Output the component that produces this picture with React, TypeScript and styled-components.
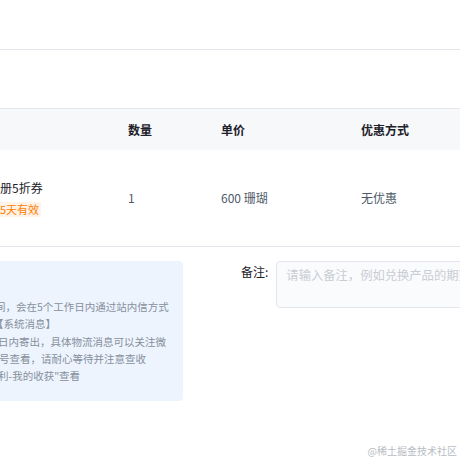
import React from 'react'
import styled, { createGlobalStyle } from 'styled-components'

const Colors = {
  title: '#1d2129',
  text: '#4e5969',
  muted: '#86909c',
  placeholder: '#c9cdd4',
  line: '#e5e6eb',
  headBg: '#f7f8fa',
  tipBg: '#edf4fe',
  orange: '#ff7d00',
  orangeBg: '#fff3e8',
}

const tips = [
  { text: '间，会在5个工作日内通过站内信方式', shift: 5 },
  { text: '【系统消息】', shift: 7 },
  { text: '日内寄出，具体物流消息可以关注微', shift: 2 },
  { text: '号查看，请耐心等待并注意查收', shift: 1 },
  { text: '利-我的收获"查看', shift: 2 },
]

export default function App() {
  return (
    <>
      <GlobalStyle />
      <Page>
        <TopBar />
        <Table>
          <HeadRow>
            <Cell />
            <HeadCell>数量</HeadCell>
            <HeadCell>单价</HeadCell>
            <HeadCell>优惠方式</HeadCell>
          </HeadRow>
          <BodyRow>
            <Cell>
              <Product>
                <ProductName>册5折券</ProductName>
                <Tag>5天有效</Tag>
              </Product>
            </Cell>
            <Cell>1</Cell>
            <Cell>600 珊瑚</Cell>
            <Cell>无优惠</Cell>
          </BodyRow>
        </Table>
        <Bottom>
          <TipBox>
            {tips.map((t) => (
              <TipLine key={t.text} $shift={t.shift}>{t.text}</TipLine>
            ))}
          </TipBox>
          <Remark>
            <RemarkLabel>备注:</RemarkLabel>
            <RemarkInput wrap="off" placeholder="请输入备注，例如兑换产品的期望尺码颜色等" />
          </Remark>
        </Bottom>
        <Watermark>@稀土掘金技术社区</Watermark>
      </Page>
    </>
  )
}

const GlobalStyle = createGlobalStyle`
  html, body {
    margin: 0;
    padding: 0;
    background: #fff;
  }
  body {
    font-family: "Noto Sans CJK SC", "Noto Sans", sans-serif;
    -webkit-font-smoothing: antialiased;
  }
`

const Page = styled.div`
  position: relative;
  width: 460px;
  height: 460px;
  overflow: hidden;
  background: #fff;
`

const TopBar = styled.div`
  height: 49px;
  border-bottom: 1px solid ${Colors.line};
  margin-bottom: 58px;
`

const Table = styled.div`
  display: flex;
  flex-direction: column;
  border-top: 1px solid ${Colors.line};
`

const Row = styled.div`
  display: grid;
  grid-template-columns: 128px 93px 140px 1fr;
  align-items: center;
`

const HeadRow = styled(Row)`
  height: 41px;
  background: ${Colors.headBg};
`

const BodyRow = styled(Row)`
  height: 96px;
  border-bottom: 1px solid ${Colors.line};
`

const Cell = styled.div`
  font-size: 12px;
  line-height: 18px;
  color: ${Colors.text};
  white-space: nowrap;
`

const HeadCell = styled(Cell)`
  color: ${Colors.title};
  font-weight: 700;
`

const Product = styled.div`
  display: flex;
  flex-direction: column;
  align-items: flex-start;
  gap: 5px;
  margin-top: -1px;
`

const ProductName = styled.span`
  color: ${Colors.title};
`

const Tag = styled.span`
  font-size: 11px;
  line-height: 15px;
  padding: 0 2px 0 0;
  color: ${Colors.orange};
  background: ${Colors.orangeBg};
`

const Bottom = styled.div`
  display: flex;
  margin-top: 14px;
  gap: 58px;
`

const TipBox = styled.div`
  flex: none;
  width: 183px;
  height: 140px;
  box-sizing: border-box;
  padding-top: 37px;
  background: ${Colors.tipBg};
  border-radius: 0 4px 4px 0;
  overflow: hidden;
`

const TipLine = styled.div<{ $shift: number }>`
  font-size: 10.5px;
  line-height: 17.25px;
  color: ${Colors.muted};
  white-space: nowrap;
  margin-left: -${(p) => p.$shift}px;
`

const Remark = styled.div`
  display: flex;
  flex: none;
  align-items: flex-start;
  gap: 8px;
`

const RemarkLabel = styled.span`
  font-size: 12px;
  line-height: 18px;
  color: ${Colors.title};
  padding-top: 2px;
  white-space: nowrap;
`

const RemarkInput = styled.textarea`
  flex: none;
  width: 320px;
  height: 47px;
  box-sizing: border-box;
  margin: 0;
  padding: 4px 9px;
  border: 1px solid ${Colors.line};
  border-radius: 4px;
  background: #fafbfc;
  font-family: "Noto Sans CJK SC", sans-serif;
  font-size: 12.3px;
  line-height: 18px;
  white-space: nowrap;
  overflow: hidden;
  resize: none;
  outline: none;

  &::placeholder {
    color: ${Colors.placeholder};
  }
`

const Watermark = styled.span`
  position: absolute;
  right: 3px;
  bottom: 2px;
  font-size: 10px;
  line-height: 14px;
  color: #b8bcc3;
`
